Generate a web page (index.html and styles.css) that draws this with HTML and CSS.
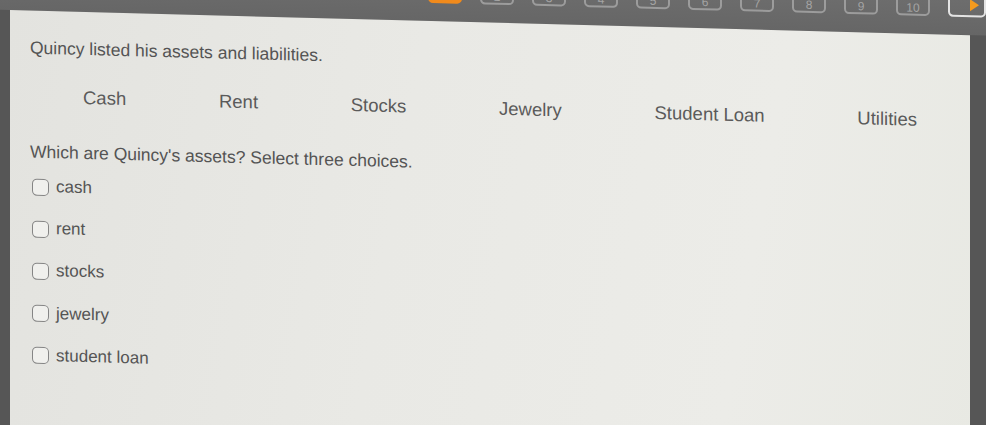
FILE: index.html
```html
<!DOCTYPE html>
<html lang="en">
<head>
<meta charset="utf-8">
<title>Assets and Liabilities</title>
<link rel="stylesheet" href="styles.css">
</head>
<body>
<div class="screen">
  <nav class="pager">
    <span class="page current">1</span>
    <span class="page">2</span>
    <span class="page">3</span>
    <span class="page">4</span>
    <span class="page">5</span>
    <span class="page">6</span>
    <span class="page">7</span>
    <span class="page">8</span>
    <span class="page">9</span>
    <span class="page">10</span>
    <span class="page next"><svg width="12" height="14" viewBox="0 0 12 14"><path d="M2 1 L11 7 L2 13 Z" fill="#f39a1e"/></svg></span>
  </nav>
  <main class="panel">
    <p class="intro">Quincy listed his assets and liabilities.</p>
    <div class="terms">
      <span>Cash</span>
      <span>Rent</span>
      <span>Stocks</span>
      <span>Jewelry</span>
      <span>Student Loan</span>
      <span>Utilities</span>
    </div>
    <p class="question">Which are Quincy's assets? Select three choices.</p>
    <ul class="options">
      <li><span class="box"></span>cash</li>
      <li><span class="box"></span>rent</li>
      <li><span class="box"></span>stocks</li>
      <li><span class="box"></span>jewelry</li>
      <li><span class="box"></span>student loan</li>
    </ul>
  </main>
</div>
</body>
</html>
```
FILE: styles.css
```css
html, body {
  margin: 0;
  padding: 0;
}
body {
  width: 986px;
  height: 425px;
  overflow: hidden;
  background: #565656;
  font-family: "Liberation Sans", Arial, sans-serif;
  color: #545454;
}
.screen {
  margin-top: -30px;
  transform: skewY(1.5deg);
  transform-origin: 10px 40px;
}
.pager {
  height: 40px;
  box-sizing: border-box;
  display: flex;
  align-items: flex-end;
  gap: 18px;
  padding: 0 0 18px 428px;
  background: linear-gradient(180deg, #6e6e6e, #666666);
}
.page {
  width: 34px;
  height: 30px;
  box-sizing: border-box;
  border: 2px solid #9c9c9c;
  border-radius: 5px;
  display: flex;
  align-items: flex-end;
  justify-content: center;
  padding-bottom: 0;
  font-size: 12px;
  line-height: 12px;
  color: #a4a4a4;
}
.page.current {
  background: #f08a1c;
  border-color: #f08a1c;
  color: #f08a1c;
}
.page.next {
  width: 38px;
  border-color: #e4e4e4;
  align-items: center;
  justify-content: flex-end;
  padding: 6px 4px 0 0;
}
.panel {
  display: block;
  margin-left: 10px;
  width: 960px;
  height: 470px;
  box-sizing: border-box;
  padding: 27px 0 0 20px;
  background: linear-gradient(100deg, #e3e3df 0%, #e9e9e5 40%, #ecece8 75%, #e8e9e3 100%);
}
.intro {
  margin: 0;
  font-size: 17.5px;
  line-height: 20px;
}
.terms {
  margin-top: 28px;
  padding: 0 53px 0 53px;
  display: flex;
  justify-content: space-between;
  font-size: 18.5px;
  line-height: 22px;
  color: #5a5a5a;
}
.question {
  margin: 34px 0 0;
  font-size: 17.5px;
  line-height: 20px;
}
.options {
  list-style: none;
  margin: 14px 0 0;
  padding: 0 0 0 2px;
  display: flex;
  flex-direction: column;
  gap: 20.2px;
  font-size: 17px;
  line-height: 22px;
}
.options li {
  display: flex;
  align-items: center;
  gap: 7px;
}
.box {
  width: 17px;
  height: 17px;
  box-sizing: border-box;
  border: 1.6px solid #858585;
  border-radius: 5px;
  background: #f0f0ed;
}
```
